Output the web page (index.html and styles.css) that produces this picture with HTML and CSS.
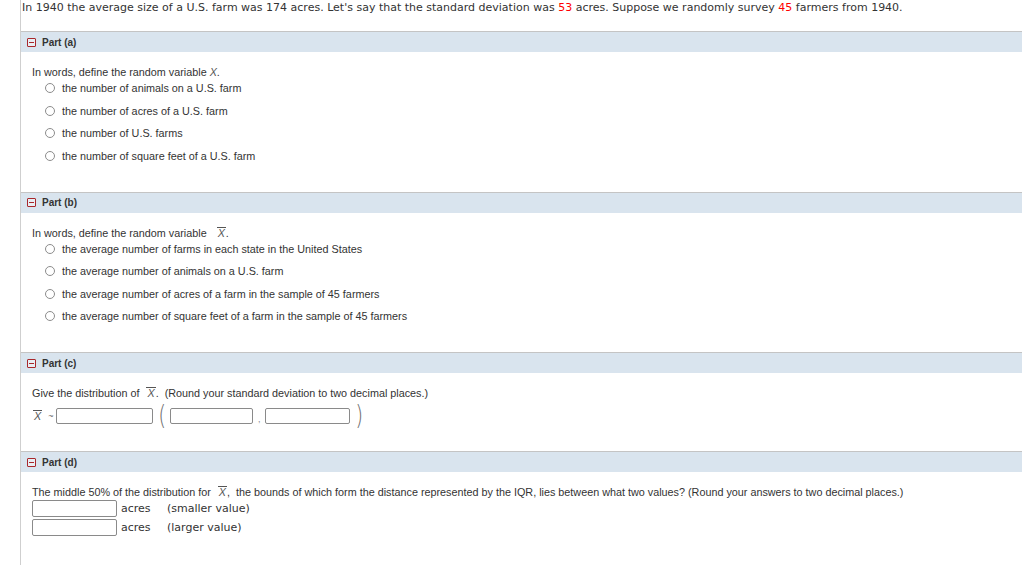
FILE: index.html
```html
<!DOCTYPE html>
<html>
<head>
<meta charset="utf-8">
<link rel="stylesheet" href="styles.css">
</head>
<body>
<div class="page">
  <p class="intro">In 1940 the average size of a U.S. farm was 174 acres. Let's say that the standard deviation was <span class="red">53</span> acres. Suppose we randomly survey <span class="red">45</span> farmers from 1940.</p>

  <section class="part">
    <div class="part-head"><span class="toggle"></span><span class="part-title">Part (a)</span></div>
    <div class="part-body">
      <div class="question">In words, define the random variable <i class="var">X</i>.</div>
      <ul class="options">
        <li><span class="radio"></span>the number of animals on a U.S. farm</li>
        <li><span class="radio"></span>the number of acres of a U.S. farm</li>
        <li><span class="radio"></span>the number of U.S. farms</li>
        <li><span class="radio"></span>the number of square feet of a U.S. farm</li>
      </ul>
    </div>
  </section>

  <section class="part">
    <div class="part-head"><span class="toggle"></span><span class="part-title">Part (b)</span></div>
    <div class="part-body">
      <div class="question">In words, define the random variable <i class="var bar wide">X</i>.</div>
      <ul class="options">
        <li><span class="radio"></span>the average number of farms in each state in the United States</li>
        <li><span class="radio"></span>the average number of animals on a U.S. farm</li>
        <li><span class="radio"></span>the average number of acres of a farm in the sample of 45 farmers</li>
        <li><span class="radio"></span>the average number of square feet of a farm in the sample of 45 farmers</li>
      </ul>
    </div>
  </section>

  <section class="part">
    <div class="part-head"><span class="toggle"></span><span class="part-title">Part (c)</span></div>
    <div class="part-body part-c">
      <div class="question">Give the distribution of <i class="var bar">X</i>.&nbsp; (Round your standard deviation to two decimal places.)</div>
      <div class="dist-row">
        <i class="var bar">X</i><span class="tilde">~</span><span class="box w95"></span><span class="paren">(</span><span class="box w83"></span><span class="comma">,</span><span class="box w85"></span><span class="paren">)</span>
      </div>
    </div>
  </section>

  <section class="part">
    <div class="part-head"><span class="toggle"></span><span class="part-title">Part (d)</span></div>
    <div class="part-body part-d">
      <div class="question">The middle 50% of the distribution for <i class="var bar">X</i>,&nbsp; the bounds of which form the distance represented by the IQR, lies between what two values? (Round your answers to two decimal places.)</div>
      <div class="answers">
        <div class="answer"><span class="box w84"></span><span class="unit">acres</span><span class="note">(smaller value)</span></div>
        <div class="answer"><span class="box w84"></span><span class="unit">acres</span><span class="note">(larger value)</span></div>
      </div>
    </div>
  </section>
</div>
</body>
</html>
```

FILE: styles.css
```css
html, body {
  margin: 0;
  padding: 0;
  background: #fff;
}

.page {
  margin-left: 20px;
  border-left: 1px solid #cfcfcf;
  min-height: 565px;
  color: #333;
}

.intro {
  margin: 0;
  padding: 1px 0 0 1px;
  height: 31px;
  box-sizing: border-box;
  font-family: "DejaVu Sans", Verdana, sans-serif;
  font-size: 11px;
  line-height: 13px;
  color: #333;
}

.red {
  color: #f00;
}

.part-head {
  display: flex;
  align-items: center;
  gap: 6px;
  height: 20px;
  padding-left: 6px;
  border-top: 1px solid #c4c4c4;
  background: #d9e4ee;
}

.toggle {
  position: relative;
  width: 7px;
  height: 7px;
  border: 1px solid #a8282c;
  border-radius: 1px;
  background: #e8eef4;
}

.toggle::after {
  content: "";
  position: absolute;
  left: 1px;
  right: 1px;
  top: 3px;
  height: 1px;
  background: #a8282c;
}

.part-title {
  font-family: "Liberation Sans", Arial, sans-serif;
  font-size: 10px;
  font-weight: bold;
  color: #333;
}

.part-body {
  padding: 12px 0 28px 11px;
  font-family: "Liberation Sans", Arial, sans-serif;
  font-size: 10.8px;
  color: #333;
}

.question {
  line-height: 16px;
}

.var {
  font-family: "Liberation Sans", Arial, sans-serif;
  font-style: italic;
  color: #555;
}

.bar {
  display: inline-block;
  margin-left: 4px;
  border-top: 1px solid #555;
  line-height: 10px;
  padding: 0 1px;
}

.bar.wide {
  margin-left: 7px;
}

.options {
  list-style: none;
  margin: 0;
  padding: 0 0 0 13px;
  display: flex;
  flex-direction: column;
  gap: 6.5px;
}

.options li {
  display: flex;
  align-items: center;
  gap: 7px;
  height: 16px;
}

.radio {
  width: 8px;
  height: 8px;
  border: 1px solid #8c8c8c;
  border-radius: 50%;
  background: #fff;
}

.part-c {
  padding-bottom: 22px;
}

.dist-row {
  display: flex;
  align-items: center;
  height: 27px;
  margin-top: 1px;
  padding-left: 1px;
}

.dist-row .bar {
  margin-left: 0;
}

.tilde {
  margin: 0 3px 0 6px;
  font-size: 9px;
  color: #666;
}

.box {
  display: inline-block;
  box-sizing: border-box;
  height: 16px;
  border: 1px solid #8a8a8a;
  border-radius: 2px;
  background: #fff;
}

.w95 { width: 97px; }
.w83 { width: 83px; }
.w85 { width: 85px; }
.w84 { width: 85px; }

.paren {
  font-family: "DejaVu Sans", sans-serif;
  font-size: 27px;
  font-weight: 200;
  line-height: 27px;
  color: #6e6e6e;
  margin: -2px 2px 0 4px;
  transform: scaleX(0.75);
}

.comma {
  margin: 6px 4px 0 5px;
  color: #888;
  font-size: 9px;
}

.answers {
  display: flex;
  flex-direction: column;
  gap: 2px;
}

.answer {
  display: flex;
  align-items: center;
  height: 17px;
  font-family: "DejaVu Sans", Verdana, sans-serif;
  font-size: 11px;
  color: #333;
}

.answer .box {
  height: 17px;
}

.unit {
  margin-left: 4px;
  width: 46px;
}

.note {
  color: #333;
}
```
